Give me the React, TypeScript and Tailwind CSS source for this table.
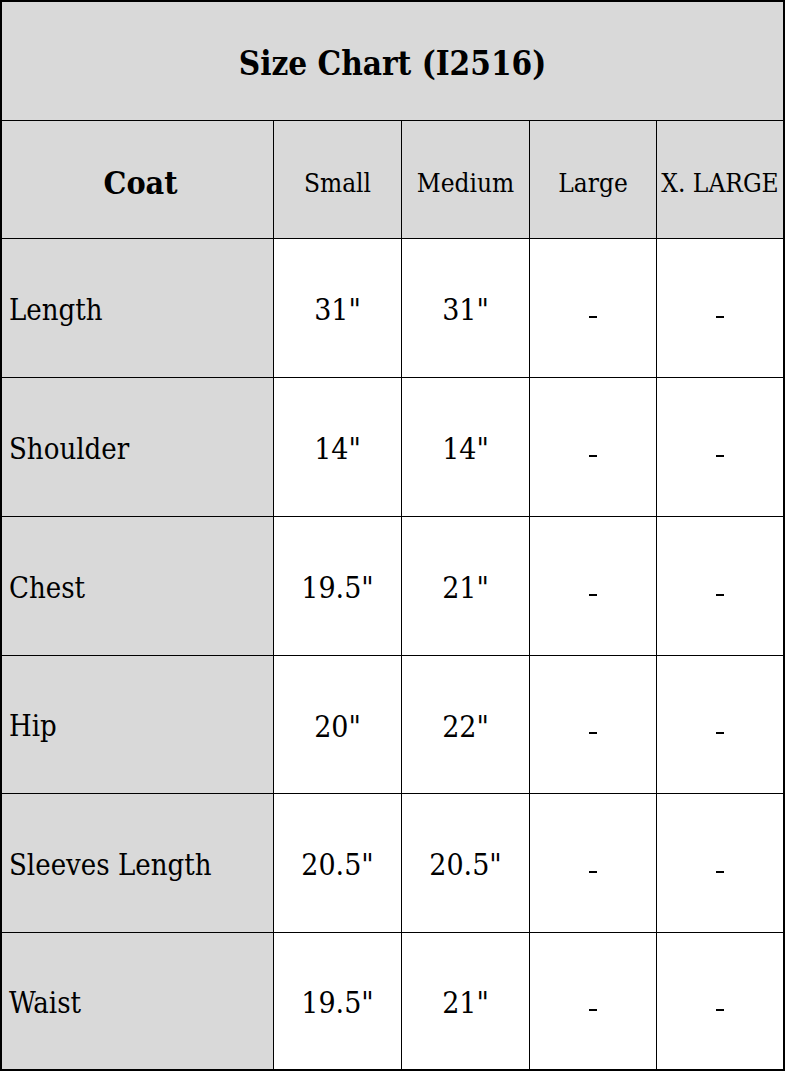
const font = { fontFamily: '"DejaVu Serif Condensed", "DejaVu Serif", serif' };

const rows: [string, string, string, number][] = [
  ["Length", '31"', '31"', 138],
  ["Shoulder", '14"', '14"', 138],
  ["Chest", '19.5"', '21"', 138],
  ["Hip", '20"', '22"', 137],
  ["Sleeves Length", '20.5"', '20.5"', 138],
  ["Waist", '19.5"', '21"', 136],
];

function Dash() {
  return <span className="inline-block w-[8px] h-[2px] bg-black mt-[17px]" />;
}

export default function App() {
  return (
    <div className="w-[785px] h-[1071px] bg-white text-black" style={font}>
      <div className="w-[785px] h-[1071px] border-2 border-black bg-black flex flex-col gap-px">
        <div className="h-[118px] bg-[#d9d9d9] flex items-center justify-center">
          <span className="text-[33px] font-bold leading-none mt-[4px]">Size Chart (I2516)</span>
        </div>
        <div className="h-[117px] grid grid-cols-[271px_127px_127px_126px_126px] gap-px">
          <div className="bg-[#d9d9d9] flex items-center justify-center">
            <span className="text-[32px] font-bold leading-none mt-[6px] ml-[6px]">Coat</span>
          </div>
          {["Small", "Medium", "Large", "X. LARGE"].map((h) => (
            <div key={h} className="bg-[#d9d9d9] flex items-center justify-center">
              <span className="text-[26px] leading-none mt-[6px] whitespace-nowrap">{h}</span>
            </div>
          ))}
        </div>
        {rows.map(([label, s, m, h]) => (
          <div
            key={label}
            className="grid grid-cols-[271px_127px_127px_126px_126px] gap-px"
            style={{ height: h }}
          >
            <div className="bg-[#d9d9d9] flex items-center pl-[7px]">
              <span className="text-[29px] leading-none mt-[4px]">{label}</span>
            </div>
            <div className="bg-white flex items-center justify-center">
              <span className="text-[30px] leading-none mt-[4px]">{s}</span>
            </div>
            <div className="bg-white flex items-center justify-center">
              <span className="text-[30px] leading-none mt-[4px]">{m}</span>
            </div>
            <div className="bg-white flex items-center justify-center">
              <Dash />
            </div>
            <div className="bg-white flex items-center justify-center">
              <Dash />
            </div>
          </div>
        ))}
      </div>
    </div>
  );
}
